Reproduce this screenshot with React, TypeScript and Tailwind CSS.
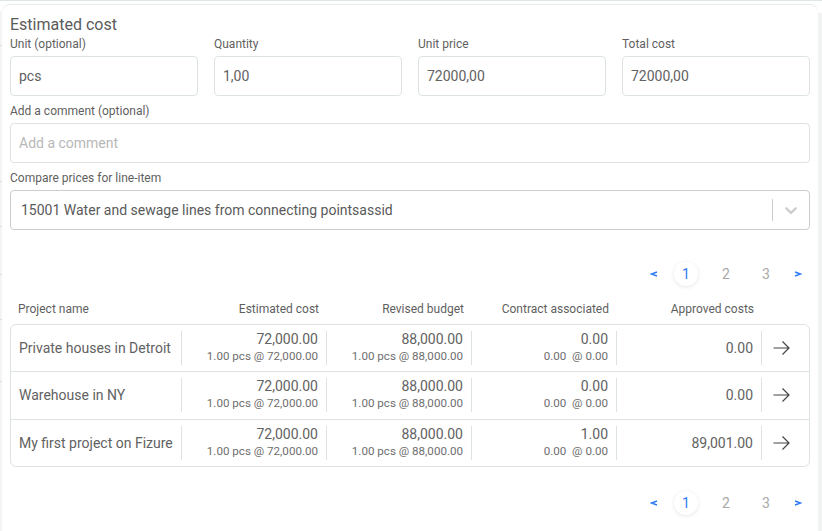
import React from "react";

const font = { fontFamily: "Roboto, sans-serif" };

function Field({ label, value, placeholder }: { label: string; value?: string; placeholder?: string }) {
  return (
    <div className="flex flex-col">
      <div className="text-[12px] leading-[16px] h-[16px] text-[#5f5f5f]">{label}</div>
      <div className={`mt-[4px] h-[40px] rounded-[4px] border border-[#dde3e3] flex items-center px-[8px] text-[14px] ${placeholder ? "text-[#b8b8b8]" : "text-[#626262]"}`}>
        {value ?? placeholder}
      </div>
    </div>
  );
}

function Pager() {
  return (
    <div className="flex items-center justify-end h-[24px] pr-[8px] text-[14px] text-[#a8a8a8]">
      <svg width="8" height="8" viewBox="0 0 8 8" className="mr-[16px]" fill="none" stroke="#2f7bf5" strokeWidth="1.4"><path d="M7 2 L1.5 4 L7 6" /></svg>
      <div className="w-[24px] h-[24px] rounded-full bg-white shadow-[0_1px_4px_rgba(0,0,0,0.10)] flex items-center justify-center text-[#2f7bf5] mr-[16px]">1</div>
      <div className="w-[24px] text-center mr-[16px]">2</div>
      <div className="w-[24px] text-center mr-[16px]">3</div>
      <svg width="8" height="8" viewBox="0 0 8 8" fill="none" stroke="#2f7bf5" strokeWidth="1.4"><path d="M1 2 L6.5 4 L1 6" /></svg>
    </div>
  );
}

function Cell({ top, sub }: { top: string; sub: string }) {
  return (
    <div className="w-[145px] h-[34px] border-r border-[#dde3e3] pr-[8px] flex flex-col items-end justify-center text-right">
      <div className="text-[14px] leading-[17px] text-[#626262]">{top}</div>
      <div className="text-[11.6px] leading-[17px] text-[#6e6e6e] whitespace-pre">{sub}</div>
    </div>
  );
}

const rows = [
  { name: "Private houses in Detroit", contract: "0.00", approved: "0.00", h: "h-[46px]" },
  { name: "Warehouse in NY", contract: "0.00", approved: "0.00", h: "h-[48px] pb-[1px]" },
  { name: "My first project on Fizure", contract: "1.00", approved: "89,001.00", h: "h-[47px]" },
];

export default function App() {
  return (
    <div style={font} className="relative w-[822px] h-[531px] overflow-hidden bg-white pl-[2px] pr-[4px] border-t border-[#dfe6e6]">
      <div className="absolute right-0 top-[12px] bottom-0 w-[4px] bg-[#f1f2f2]" />
      <div className="absolute left-0 top-[10px] bottom-0 w-[2px] bg-[#f3f4f4]" />
      <div className="absolute left-0 top-[44px] w-[2px] h-px bg-[#dddddd]" />
      <div className="absolute left-0 top-[180px] w-[2px] h-px bg-[#dddddd]" />
      <div className="absolute left-0 top-[225px] w-[2px] h-px bg-[#dddddd]" />
      <div className="absolute left-0 top-[273px] w-[2px] h-px bg-[#dddddd]" />
      <div className="absolute left-0 top-[318px] w-[2px] h-px bg-[#dddddd]" />
      <div className="absolute left-0 top-[380px] w-[2px] h-px bg-[#dddddd]" />
      <div className="relative mt-[3px] h-[540px] bg-white rounded-t-[8px] border-t border-[#e6eaea] px-[8px] pt-[10px]">
        <div className="text-[16px] leading-[20px] text-[#5a5a5a]">Estimated cost</div>
        <div className="grid grid-cols-4 gap-x-[16px] mt-[1px]">
          <Field label="Unit (optional)" value="pcs" />
          <Field label="Quantity" value="1,00" />
          <Field label="Unit price" value="72000,00" />
          <Field label="Total cost" value="72000,00" />
        </div>
        <div className="mt-[7px]">
          <Field label="Add a comment (optional)" placeholder="Add a comment" />
        </div>
        <div className="mt-[7px] flex flex-col">
          <div className="text-[12px] leading-[16px] h-[16px] text-[#5f5f5f]">Compare prices for line-item</div>
          <div className="mt-[4px] h-[40px] rounded-[4px] border border-[#cccccc] flex items-center pl-[10px] text-[14px] text-[#5a5a5a]">
            <span className="flex-1">15001 Water and sewage lines from connecting pointsassid</span>
            <div className="w-px h-[22px] bg-[#cccccc]" />
            <svg width="20" height="20" viewBox="0 0 20 20" className="mx-[8px]" fill="#cccccc">
              <path d="M4.516 7.548c.436-.446 1.043-.481 1.576 0L10 11.295l3.908-3.747c.533-.481 1.141-.446 1.574 0 .436.445.408 1.197 0 1.615-.406.418-4.695 4.502-4.695 4.502a1.095 1.095 0 0 1-1.576 0S5.123 9.581 4.516 9.163c-.409-.418-.436-1.17 0-1.615z" />
            </svg>
          </div>
        </div>

        <div className="mt-[32px]"><Pager /></div>

        <div className="flex mt-[14px] h-[18px] items-center text-[12px] text-[#5f5f5f] pr-[56px]">
          <div className="w-[172px] pl-[8px]">Project name</div>
          <div className="w-[137px] text-right">Estimated cost</div>
          <div className="w-[145px] text-right">Revised budget</div>
          <div className="w-[145px] text-right">Contract associated</div>
          <div className="w-[145px] text-right">Approved costs</div>
        </div>

        <div className="mt-[6px] rounded-[6px] border border-[#dde3e3]">
          {rows.map((r, i) => (
            <div key={r.name} className={`flex items-center ${r.h} ${i > 0 ? "border-t border-[#dde3e3]" : ""}`}>
              <div className="w-[171px] h-[34px] border-r border-[#dde3e3] pl-[8px] flex items-center text-[14px] text-[#626262] whitespace-nowrap">{r.name}</div>
              <Cell top="72,000.00" sub="1.00 pcs @ 72,000.00" />
              <Cell top="88,000.00" sub="1.00 pcs @ 88,000.00" />
              <Cell top={r.contract} sub="0.00  @ 0.00" />
              <div className="w-[145px] h-[34px] border-r border-[#dde3e3] pr-[8px] flex items-center justify-end text-[14px] text-[#626262]">{r.approved}</div>
              <div className="flex-1 flex pl-[11px]">
                <svg width="17" height="16" viewBox="0 0 17 16" fill="none" stroke="#444444" strokeWidth="1.2"><path d="M0.5 8 H16 M9.5 1.5 L16 8 L9.5 14.5" /></svg>
              </div>
            </div>
          ))}
        </div>

        <div className="mt-[24px]"><Pager /></div>
      </div>
    </div>
  );
}
